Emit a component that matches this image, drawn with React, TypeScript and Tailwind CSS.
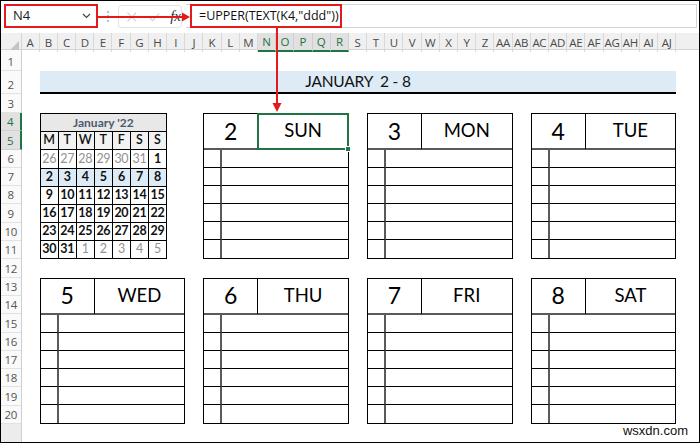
import React from "react";

const COLS = ["A","B","C","D","E","F","G","H","I","J","K","L","M","N","O","P","Q","R","S","T","U","V","W","X","Y","Z","AA","AB","AC","AD","AE","AF","AG","AH","AI","AJ"];
const ROWS = [1,2,3,4,5,6,7,8,9,10,11,12,13,14,15,16,17,18,19,20];

const CELL_FONT = "font-['Lato','Open_Sans',sans-serif]";
const UI_FONT = "font-['Open_Sans','Noto_Sans',sans-serif]";

function FormulaBar() {
  return (
    <div className={`h-[32px] flex items-start pt-[3px] pl-[3px] pr-[2px] ${UI_FONT}`}>
      <div className="w-[94px] h-[24px] border-2 border-[#e3191c] flex items-center justify-between pl-[7px] pr-[5px] text-[13px] text-[#222]">
        <span>N4</span>
        <svg width="9" height="6" viewBox="0 0 9 6"><path d="M1 1 L4.5 4.5 L8 1" fill="none" stroke="#444" strokeWidth="1.2"/></svg>
      </div>
      <div className="w-[20px] h-[24px] flex items-center justify-center text-[#9a9a9a] text-[12px]">⋮</div>
      <div className="w-[64px] h-[23px] mt-[1px] border border-[#e3e3e3] rounded-[3px] flex items-center pl-[7px] gap-[10px]">
        <svg width="12" height="12" viewBox="0 0 12 12"><path d="M1.5 1.5 L10.5 10.5 M10.5 1.5 L1.5 10.5" stroke="#d0d0d0" strokeWidth="1.2"/></svg>
        <svg width="13" height="12" viewBox="0 0 13 12"><path d="M1.5 6.5 L4.8 9.8 L11.5 2.5" fill="none" stroke="#d0d0d0" strokeWidth="1.2"/></svg>
        <span className="font-['Liberation_Serif',serif] italic text-[15px] text-[#333] leading-none">fx</span>
      </div>
      <div className="flex-1 h-[24px] flex ml-[4px]">
        <div className="w-[4px] h-full border-y border-[#d6d6d6]"></div>
        <div className="w-[152px] h-[24px] border-2 border-[#e3191c] flex items-center pl-[7px] text-[12.5px] text-[#111] whitespace-pre">=UPPER(TEXT(K4,"ddd"))</div>
        <div className="flex-1 h-full border-y border-r border-[#d6d6d6]"></div>
      </div>
    </div>
  );
}

function ColumnHeader() {
  return (
    <div className={`col-start-1 col-end-39 row-start-1 row-end-2 grid grid-cols-[20.5px_repeat(36,18.2px)_1fr] bg-[#f0f0f0] border-b border-[#d4d4d4] ${UI_FONT}`}>
      <div className="relative border-r border-[#d4d4d4]">
        <svg className="absolute right-[2px] bottom-[2px]" width="9" height="9" viewBox="0 0 9 9"><path d="M9 0 L9 9 L0 9 Z" fill="#c4c4c4"/></svg>
      </div>
      {COLS.map((c, i) => {
        const sel = i >= 13 && i <= 17;
        return (
          <div
            key={c}
            className={
              sel
                ? "flex items-center justify-center text-[11.5px] text-[#217346] bg-[#e1e1e1] border-r border-[#cfcfcf] border-b-2 border-b-[#217346] tracking-[-0.3px]"
                : "flex items-center justify-center text-[11.5px] text-[#4a4a4a] border-r border-[#d9d9d9] tracking-[-0.3px]"
            }
          >
            {c}
          </div>
        );
      })}
      <div></div>
    </div>
  );
}

function RowHeader() {
  return (
    <div className={`col-start-1 col-end-2 row-start-2 row-end-23 grid grid-rows-[21px_23px_19px_repeat(17,18.3px)_1fr] bg-[#fafafa] border-r border-[#cfcfcf] ${UI_FONT}`}>
      {ROWS.map((r) => {
        const sel = r === 4 || r === 5;
        return (
          <div
            key={r}
            className={
              sel
                ? "flex items-end justify-center pb-[1px] text-[11.5px] leading-[14px] tracking-[-0.3px] text-[#217346] bg-[#e1e1e1] border-b border-[#d0d0d0] border-r-2 border-r-[#217346] -mr-px"
                : "flex items-end justify-center pb-[1px] text-[11.5px] leading-[14px] tracking-[-0.3px] text-[#555] border-b border-[#e2e2e2]"
            }
          >
            {r}
          </div>
        );
      })}
      <div className="bg-[#ececec]"></div>
    </div>
  );
}

function DayBox({ num, day, selected, place }: { num: string; day: string; selected?: boolean; place: string }) {
  const lines = [0, 1, 2, 3, 4, 5];
  return (
    <div className={`${place} border border-black grid grid-cols-8 grid-rows-8 bg-white ${CELL_FONT}`}>
      <div className="col-span-3 row-span-2 border-r border-black border-b-2 border-b-[#5a5a5a] flex items-center justify-center text-[23px] text-black">{num}</div>
      <div className="col-span-5 row-span-2 border-b-2 border-b-[#5a5a5a] flex items-center justify-center text-[18.5px] text-black relative">
        {day}
        {selected && (
          <div className="absolute -left-px -top-px -right-px -bottom-[2px] border-2 border-[#217346]">
            <div className="absolute -right-[4px] -bottom-[4px] w-[6px] h-[6px] bg-[#217346] border border-white"></div>
          </div>
        )}
      </div>
      {lines.map((i) => (
        <React.Fragment key={i}>
          <div className={i < 5 ? "border-r-2 border-r-[#5a5a5a] border-b border-b-black" : "border-r-2 border-r-[#5a5a5a]"}></div>
          <div className={i < 5 ? "col-span-7 border-b border-b-black" : "col-span-7"}></div>
        </React.Fragment>
      ))}
    </div>
  );
}

const CAL_ROWS: { n: number; muted: boolean }[][] = [
  [26, 27, 28, 29, 30, 31].map((n) => ({ n, muted: true })).concat([{ n: 1, muted: false }]),
  [2, 3, 4, 5, 6, 7, 8].map((n) => ({ n, muted: false })),
  [9, 10, 11, 12, 13, 14, 15].map((n) => ({ n, muted: false })),
  [16, 17, 18, 19, 20, 21, 22].map((n) => ({ n, muted: false })),
  [23, 24, 25, 26, 27, 28, 29].map((n) => ({ n, muted: false })),
  [{ n: 30, muted: false }, { n: 31, muted: false }].concat([1, 2, 3, 4, 5].map((n) => ({ n, muted: true }))),
];

function Calendar() {
  const letters = ["M", "T", "W", "T", "F", "S", "S"];
  return (
    <div className={`col-start-3 col-end-10 row-start-5 row-end-13 border border-black bg-black grid grid-cols-7 grid-rows-8 gap-px ${CELL_FONT}`}>
      <div className="col-span-7 bg-[#e8e8e8] flex items-center justify-center text-[12px] font-bold text-[#4a5a6e]">January '22</div>
      {letters.map((l, i) => (
        <div key={i} className="bg-[#f2f2f2] flex items-center justify-center text-[12.5px] font-semibold text-[#111]">{l}</div>
      ))}
      {CAL_ROWS.map((row, ri) =>
        row.map((c, ci) => (
          <div
            key={`${ri}-${ci}`}
            className={
              (ri === 1 ? "bg-[#ddebf7] " : "bg-white ") +
              (c.muted
                ? "flex items-center justify-center text-[12.5px] text-[#929292] tracking-[-0.3px]"
                : "flex items-center justify-center text-[12.5px] font-bold text-[#111] tracking-[-0.3px]")
            }
          >
            {c.n}
          </div>
        ))
      )}
    </div>
  );
}

export default function App() {
  return (
    <div className="w-[700px] h-[443px] relative overflow-hidden bg-white border border-black flex flex-col">
      <FormulaBar />
      <div className="flex-1 grid grid-cols-[20.5px_repeat(36,18.2px)_1fr] grid-rows-[17px_21px_23px_19px_repeat(17,18.3px)_1fr]">
        <ColumnHeader />
        <RowHeader />
        <div className={`col-start-3 col-end-38 row-start-3 row-end-4 bg-[#ddebf7] border-b-2 border-black flex items-center justify-center pt-[1px] text-[15.5px] tracking-[-0.2px] text-[#111] whitespace-pre ${CELL_FONT}`}>
          JANUARY  2 - 8
        </div>
        <Calendar />
        <DayBox num="2" day="SUN" selected place="col-start-12 col-end-20 row-start-5 row-end-13" />
        <DayBox num="3" day="MON" place="col-start-21 col-end-29 row-start-5 row-end-13" />
        <DayBox num="4" day="TUE" place="col-start-30 col-end-38 row-start-5 row-end-13" />
        <DayBox num="5" day="WED" place="col-start-3 col-end-11 row-start-14 row-end-22" />
        <DayBox num="6" day="THU" place="col-start-12 col-end-20 row-start-14 row-end-22" />
        <DayBox num="7" day="FRI" place="col-start-21 col-end-29 row-start-14 row-end-22" />
        <DayBox num="8" day="SAT" place="col-start-30 col-end-38 row-start-14 row-end-22" />
      </div>
      <svg className="absolute left-0 top-0 pointer-events-none" width="700" height="443" viewBox="0 0 700 443">
        <line x1="97" y1="16" x2="183" y2="16" stroke="#e3191c" strokeWidth="2" />
        <polygon points="181,11.5 189,16 181,20.5" fill="#e3191c" />
        <line x1="276" y1="27" x2="276" y2="104" stroke="#e3191c" strokeWidth="2" />
        <polygon points="271.5,102 280.5,102 276,111" fill="#e3191c" />
      </svg>
      <div className="absolute right-[11px] bottom-[2px] text-[13px] text-[#111] font-['Liberation_Sans',Arial,sans-serif]">wsxdn.com</div>
    </div>
  );
}
